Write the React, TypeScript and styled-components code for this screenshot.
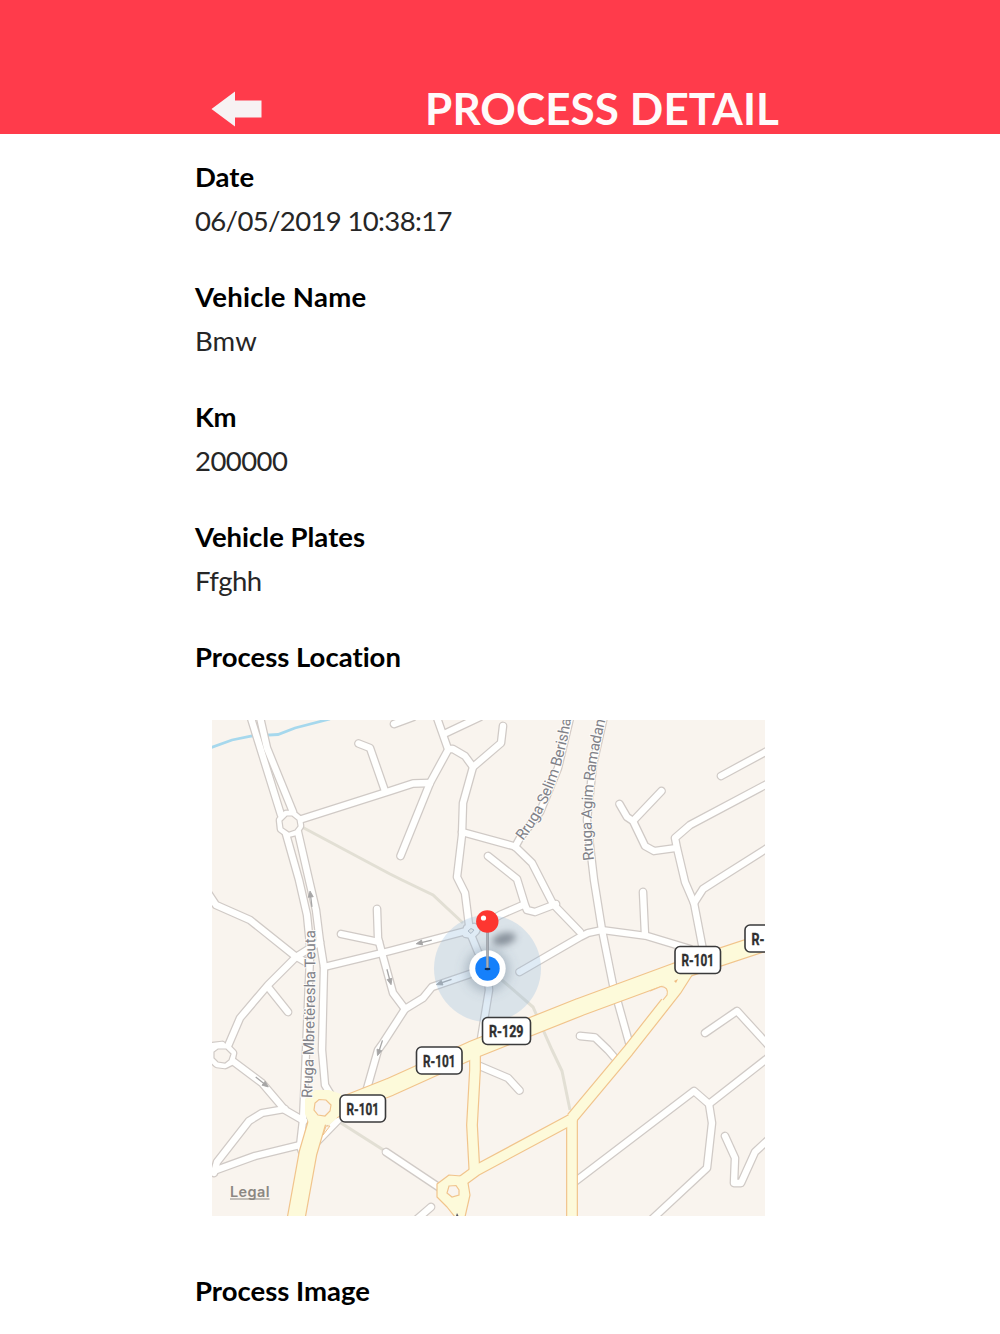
import styled, { createGlobalStyle } from "styled-components";

const GlobalStyle = createGlobalStyle`
body {
  margin: 0;
  background-color: #ffffff;
  font-family: Optima, Lato, sans-serif;
  font-variant-ligatures: none;
}
`;

const Screen = styled.div`
height: 1334px;
overflow: hidden;
background-color: #ffffff;
`;

const Header = styled.header`
height: 134px;
box-sizing: border-box;
padding: 83px 221px 0 211px;
display: flex;
justify-content: space-between;
align-items: flex-start;
background-color: #ff3b4b;
`;

const BackButton = styled.button`
margin: 8px 0 0;
padding: 0;
border: none;
background: none;
line-height: 0;
`;

const Title = styled.h1`
margin: 0;
font-size: 44px;
line-height: 50px;
font-weight: 700;
white-space: nowrap;
color: #fffafa;
letter-spacing: 0.1px;
`;

const Main = styled.main`
padding: 21px 0 0 195px;
`;

const Field = styled.section`
height: 120px;
`;

const Label = styled.h2<{ $spacing?: number }>`
margin: 0;
font-size: 27.5px;
line-height: 44px;
font-weight: 700;
white-space: nowrap;
color: #000000;
letter-spacing: ${props=>props.$spacing ?? 0}px;
`;

const Value = styled.p<{ $spacing?: number }>`
margin: 0;
font-size: 27.5px;
line-height: 43px;
font-weight: 400;
white-space: nowrap;
color: #262626;
letter-spacing: ${props=>props.$spacing ?? 0}px;
`;

const MapFrame = styled.div`
width: 553px;
height: 496px;
margin: 41px 0 53px 17px;
overflow: hidden;
background-color: #f9f4ee;

  svg {
display: block;
  }
`;

const StreetName = styled.text`
font-family: Roboto, sans-serif;
font-size: 15px;
fill: #808188;
stroke: #fdfbf8;
stroke-width: 2px;
paint-order: stroke;
`;

const RouteName = styled.text`
font-family: Roboto, sans-serif;
font-size: 17px;
font-weight: 700;
fill: #2f2f30;
stroke: #2f2f30;
stroke-width: 0.4px;
`;

const Legal = styled.text`
font-family: Inter, sans-serif;
font-size: 14.5px;
font-weight: 600;
fill: #8b8782;
`;

interface IField {
    label: string;
    value: string;
    labelSpacing: number;
    valueSpacing: number;
}

const fields: IField[] = [
    { label: "Date", value: "06/05/2019 10:38:17", labelSpacing: 0, valueSpacing: -0.64 },
    { label: "Vehicle Name", value: "Bmw", labelSpacing: 0.28, valueSpacing: 0.1 },
    { label: "Km", value: "200000", labelSpacing: -0.3, valueSpacing: -0.55 },
    { label: "Vehicle Plates", value: "Ffghh", labelSpacing: 0, valueSpacing: -0.6 },
];

const tracks = [
    "M302 827L390 874L402 880L433 895L463 923",
    "M487 968L503 981L533 1007L552 1050L562 1071L570 1110",
    "M341 1123L385 1151",
];

const streets = [
    "M250 715L281 815",
    "M259.500 715L267 748L293 812",
    "M302 819L390 791L413 783.5L430 783",
    "M358.500 743.500L370 748L385 791",
    "M286 834L299 880L307 915L310 945",
    "M298 832L309 880L316 910L320 942L324 967L322 1050L325 1085L334 1100L365 1098",
    "M311 935L309 980L304 1098L303 1120L300 1146L305 1160",
    "M208 893L216 905L250 920L295 956L309 964",
    "M320 942L296 957L268 985L240 1018L228 1046",
    "M268 987L288 1012",
    "M208 1046.500L222 1045",
    "M341 934L379 942",
    "M377 909L378 938L382 953L393 993L405 1009",
    "M324 967L390 951L466 931",
    "M472 931L500 915L523 905",
    "M436 715L448 749L453 749L465 756L473 767L463 803L462 835L457 877L465 893L469 925",
    "M462 832L515 846.500L532 863L553 904L580 932",
    "M515 847L520 838L540 812L558 768L570 718",
    "M448 750L430 783L400.500 856",
    "M444 734L480 717",
    "M394 724L413 717",
    "M473 767L501 743L503 726",
    "M488 856L517 879L525 905L527 910L535 912L556 904",
    "M604 716L593 765L587 820L594 880L602 930L613 985L618 1003L630 1046",
    "M519.500 972L580 937L588 933L602 930L647 936L690 949",
    "M643 892L645 935",
    "M619.500 804L627 817L633 821L645 846L654 851L676 848",
    "M661.500 791L633 821",
    "M769 783L690 825L675 838L677 848L685 882L694 903L704 955",
    "M721 776L769 750",
    "M769 847L717 880L703 889L694 903",
    "M580 1036L595 1037.500L608 1050L614 1057",
    "M705 1033L737 1011L769 1046",
    "M572 1184L694 1091L709 1104L769 1057",
    "M709 1104L712 1123L707 1168L650 1221",
    "M725 1136L735 1158L734 1183L741 1183L755 1152L769 1139",
    "M405 1009L383 1043L378 1050L366 1092",
    "M405 1009L423 998L432 987L470 974",
    "M471 935L478 952L487 968L489 990L480 1045",
    "M230 1059L262 1083L285 1110L304 1121",
    "M285 1109L262 1113L249 1121L217 1162L214 1173",
    "M208 1173L255 1156L300 1145",
    "M345 1113L308 1151",
    "M386 1152L440 1188",
    "M475 1064L508 1078L519.500 1090.500",
    "M431 1207L416 1220",
];

const routes = [
    { d: "M322 1114L390 1087L472 1050L580 1007L675 972L769 941", width: 16.5 },
    { d: "M690 968L676 990L628 1051L572 1118", width: 10 },
    { d: "M572 1116V1221", width: 9.5 },
    { d: "M572 1119L477 1170L462 1181", width: 9.5 },
    { d: "M475 1050L475 1070L472 1125L474.500 1172", width: 9.5 },
    { d: "M320 1112L308 1153L295.500 1222", width: 16.5 },
];

const badges = [
    { x: 340, y: 1095, width: 45.5, textWidth: 32.5, label: "R-101" },
    { x: 416.5, y: 1047, width: 45.5, textWidth: 32.5, label: "R-101" },
    { x: 482.5, y: 1017.5, width: 48, textWidth: 34.5, label: "R-129" },
    { x: 675, y: 946.5, width: 45.5, textWidth: 32.5, label: "R-101" },
    { x: 745, y: 925, width: 45.5, textWidth: 13, label: "R-" },
];

// x, y and the rotation of the one way arrows
const arrows = [
    [311, 899, -97],
    [424, 942, 167],
    [389, 977, 75],
    [444, 982, 161],
    [380, 1048, 108],
    [262, 1082, 38],
];

function StreetMap(){
    return(
        <svg width="553" height="496" viewBox="212 720 553 496" fill="none">
            <defs>
                <filter id="soft" x="-60%" y="-100%" width="220%" height="300%">
                    <feGaussianBlur stdDeviation="3.500" />
                </filter>
                <filter id="glow" x="-50%" y="-50%" width="200%" height="200%">
                    <feGaussianBlur stdDeviation="6" />
                </filter>
                <path id="berisha" d="M523 841C549 809 565 765 573 706" />
                <path id="ramadan" d="M594 860C588 812 594 762 609 706" />
                <path id="teuta" d="M311 1098C313 1050 315 990 314 920" />
            </defs>
            <path d="M210 748L232 740L252 736L278 734.500L295 728L330 719" stroke="#a6d8ed" strokeWidth="2.800" />
            <g stroke="#e2dfd4" strokeWidth="3">
                {tracks.map((d)=><path key={d} d={d} />)}
            </g>
            <g stroke="#d0cac6" strokeWidth="8.800" strokeLinecap="round" strokeLinejoin="round">
                {streets.map((d)=><path key={d} d={d} />)}
                <path d="M286 814L293 814L299 819L300 826L296 832L288 834L281 829L280 820Z" />
                <path d="M218 1047L227 1047L233 1053L231 1062L225 1065L217 1064L212 1059L212 1051Z" />
                <path d="M467 928L474 927L476 931L472 935L466 934Z" />
            </g>
            <g stroke="#fffffe" strokeWidth="6.300" strokeLinecap="round" strokeLinejoin="round">
                {streets.map((d)=><path key={d} d={d} />)}
                <path d="M286 814L293 814L299 819L300 826L296 832L288 834L281 829L280 820Z" />
                <path d="M218 1047L227 1047L233 1053L231 1062L225 1065L217 1064L212 1059L212 1051Z" />
                <path d="M467 928L474 927L476 931L472 935L466 934Z" />
            </g>
            <path d="M287 816L292 816L297 820L298 826L295 830L289 832L283 828L282 821Z" fill="#f9f4ee" stroke="#d0cac6" strokeWidth="1.200" />
            <path d="M218 1049L226 1049L231 1054L229 1060L225 1063L218 1062L214 1058L214 1052Z" fill="#f9f4ee" stroke="#d0cac6" strokeWidth="1.200" />
            <path d="M468 931L471 928.500L474 930L471 933.500Z" fill="#f9f4ee" stroke="#b9bcc0" strokeWidth="1" />
            <g stroke="#f1c48c" strokeLinejoin="round">
                {routes.map((r)=><path key={r.d} d={r.d} strokeWidth={r.width + 2.4} />)}
                <path d="M449 1175L461 1176L468 1183L470 1195L465 1217H455L447 1207L437 1197V1184Z" fill="#fdfada" strokeWidth="1.200" />
            </g>
            <g stroke="#fdfada" strokeLinejoin="round">
                {routes.map((r)=><path key={r.d} d={r.d} strokeWidth={r.width} />)}
            </g>
            <path d="M661 986Q668 984 667 995L682 985L696 965L680 970Z" fill="#fdfada" />
            <path d="M650 991L661 986.500Q669 987 667 995L663 1000" stroke="#f1c48c" strokeWidth="1.200" fill="#f9f4ee" />
            <path d="M315 1090L329 1090L341 1094L342 1110L336 1119L329 1125L309 1123L305 1114L305 1099Z" fill="#fdfada" />
            <path d="M319 1099.500L326 1100L331 1105L330 1111L325 1116L318 1115L314 1110L315 1103Z" fill="#f9f4ee" stroke="#f1c48c" strokeWidth="1.200" />
            <path d="M326 1126L330 1126L323 1135Z" fill="#f9f4ee" stroke="#f1c48c" />
            <path d="M449 1186L456 1185.500L459 1190L459 1195L452 1197L447 1193Z" fill="#f9f4ee" stroke="#f1c48c" strokeWidth="1.200" />
            <path d="M674 981L678 979L676 983Z" fill="#efbb80" />
            <path d="M456 1216L457 1213L458.500 1216Z" fill="#555566" />

            {arrows.map(([x, y, angle])=>(
                <g key={`${x}-${y}`} transform={`translate(${x} ${y}) rotate(${angle})`} stroke="#a6a5a5" strokeWidth="1.300">
                    <path d="M-8 0H6" />
                    <path d="M2 -2.500L8 0L2 2.500Z" fill="#a6a5a5" strokeWidth="0.800" />
                </g>
            ))}

            <StreetName><textPath href="#berisha" textLength="133">Rruga Selim Berisha</textPath></StreetName>
            <StreetName><textPath href="#ramadan" textLength="141">Rruga Agim Ramadan</textPath></StreetName>
            <StreetName dy="1"><textPath href="#teuta" textLength="168">Rruga Mbretëresha Teuta</textPath></StreetName>

            <circle cx="487.500" cy="968.500" r="53.500" fill="#8ab6dd" fillOpacity="0.270" />
            <circle cx="487.500" cy="970" r="21" fill="#52687d" fillOpacity="0.400" filter="url(#glow)" />
            <circle cx="487.500" cy="968.500" r="18.200" fill="#ffffff" />
            <circle cx="487.500" cy="968.500" r="12.200" fill="#1580fb" />
            <ellipse cx="504" cy="939" rx="12" ry="6" transform="rotate(-14 504 939)" fill="#4f5965" fillOpacity="0.600" filter="url(#soft)" />
            <ellipse cx="487.500" cy="969" rx="3" ry="1.300" fill="#0b2d5b" />
            <path d="M487.500 931V968" stroke="#8f949b" strokeWidth="2.600" />
            <path d="M487.200 931V967" stroke="#b9bcc1" strokeWidth="1" />
            <circle cx="487.300" cy="921.500" r="11.200" fill="#fd3630" />
            <circle cx="483.500" cy="918" r="2.600" fill="#ffffff" />

            {badges.map((b)=>(
                <g key={`${b.x}-${b.y}`}>
                    <rect x={b.x} y={b.y} width={b.width} height="27" rx="5" fill="#ffffff" stroke="#3a3a3b" strokeWidth="1.600" />
                    <RouteName x={b.x + 6.5} y={b.y + 19.6} textLength={b.textWidth} lengthAdjust="spacingAndGlyphs">{b.label}</RouteName>
                </g>
            ))}
            <Legal x="230" y="1197" textLength="39.500">Legal</Legal>
            <path d="M230 1199H269.500" stroke="#8b8782" strokeWidth="1.200" />
        </svg>
    );
}

function App(){
    return(
        <>
        <GlobalStyle />
        <Screen>
            <Header>
                <BackButton aria-label="Back">
                    <svg width="51" height="36" viewBox="0 0 51 36">
                        <path d="M0.500 18L24 0.500V9.500H50.500V26.500H24V35.500Z" fill="#f7f2f3" />
                    </svg>
                </BackButton>
                <Title>PROCESS DETAIL</Title>
            </Header>
            <Main>
                {fields.map((field)=>(
                    <Field key={field.label}>
                        <Label $spacing={field.labelSpacing}>{field.label}</Label>
                        <Value $spacing={field.valueSpacing}>{field.value}</Value>
                    </Field>
                ))}
                <Label>Process Location</Label>
                <MapFrame>
                    <StreetMap />
                </MapFrame>
                <Label>Process Image</Label>
            </Main>
        </Screen>
        </>
    );
}

export default App;
